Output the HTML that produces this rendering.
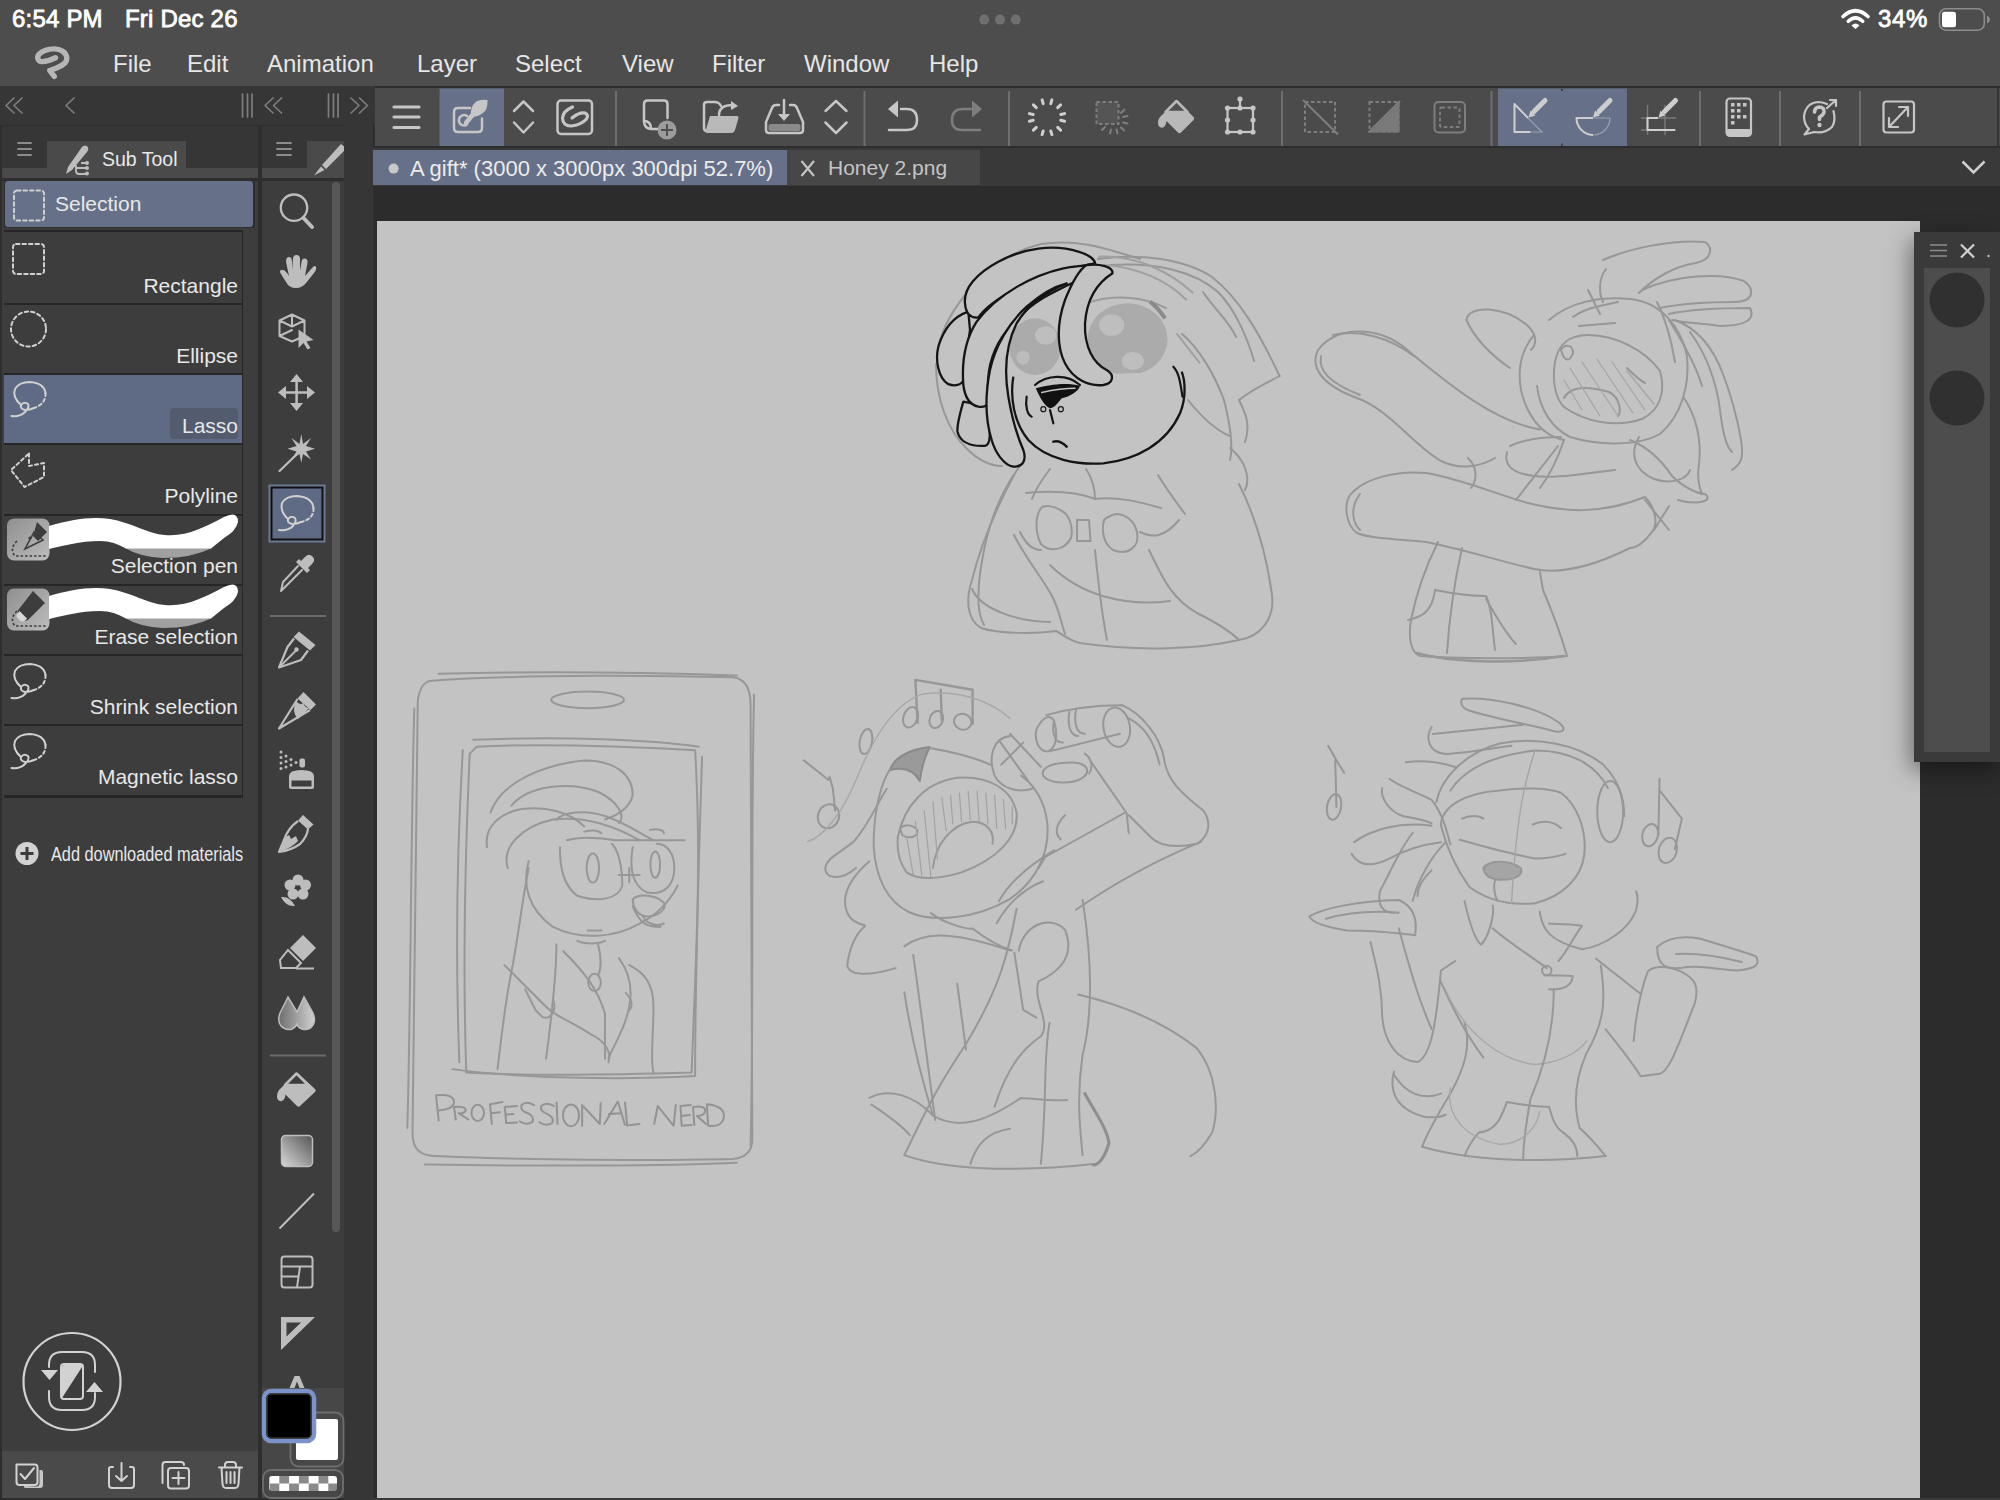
<!DOCTYPE html>
<html><head><meta charset="utf-8">
<style>
*{margin:0;padding:0;box-sizing:border-box}
html,body{width:2000px;height:1500px;overflow:hidden;background:#2c2c2c;font-family:"Liberation Sans",sans-serif}
.a{position:absolute}
svg{position:absolute;overflow:visible}
.t{position:absolute;white-space:nowrap;color:#e8e8e8}
</style></head><body>
<!-- top bars -->
<div class="a" style="left:0;top:0;width:2000px;height:86px;background:#4d4d4d"></div>
<div class="t" style="left:12px;top:5px;font-size:24px;color:#fff;-webkit-text-stroke:0.8px #fff;letter-spacing:0.2px">6:54 PM</div>
<div class="t" style="left:125px;top:5px;font-size:24px;color:#fff;-webkit-text-stroke:0.8px #fff;letter-spacing:0.2px">Fri Dec 26</div>
<div class="t" style="left:113px;top:50px;font-size:24px;color:#e6e6e6">File</div>
<div class="t" style="left:187px;top:50px;font-size:24px;color:#e6e6e6">Edit</div>
<div class="t" style="left:267px;top:50px;font-size:24px;color:#e6e6e6">Animation</div>
<div class="t" style="left:417px;top:50px;font-size:24px;color:#e6e6e6">Layer</div>
<div class="t" style="left:515px;top:50px;font-size:24px;color:#e6e6e6">Select</div>
<div class="t" style="left:622px;top:50px;font-size:24px;color:#e6e6e6">View</div>
<div class="t" style="left:712px;top:50px;font-size:24px;color:#e6e6e6">Filter</div>
<div class="t" style="left:804px;top:50px;font-size:24px;color:#e6e6e6">Window</div>
<div class="t" style="left:929px;top:50px;font-size:24px;color:#e6e6e6">Help</div>


<svg style="left:0;top:0" width="2000" height="40">
<circle cx="984.2" cy="19.6" r="5" fill="#6f6f6f"/><circle cx="1000" cy="19.6" r="5" fill="#6f6f6f"/><circle cx="1015.8" cy="19.6" r="5" fill="#6f6f6f"/>
<path d="M1843 16.5Q1855.5 5 1868 16.5" fill="none" stroke="#fff" stroke-width="3.6" stroke-linecap="round"/>
<path d="M1848.3 21.3Q1855.5 14.5 1862.7 21.3" fill="none" stroke="#fff" stroke-width="3.6" stroke-linecap="round"/>
<path d="M1851.5 25.5Q1855.5 21.5 1859.5 25.5L1855.5 29Z" fill="#fff"/>
<rect x="1939.5" y="8.8" width="44.8" height="21.4" rx="6.5" fill="none" stroke="#8d8d8d" stroke-width="1.6"/>
<rect x="1942" y="11.8" width="14" height="15.5" rx="2.5" fill="#fff"/>
<path d="M1987 15.5Q1990 17 1990 19.5Q1990 22 1987 23.5Z" fill="#8d8d8d"/>
</svg>
<div class="t" style="left:1878px;top:5px;font-size:24px;color:#fff;-webkit-text-stroke:0.8px #fff;letter-spacing:0.6px">34%</div>
<!-- left nav row -->
<div class="a" style="left:0;top:86px;width:375px;height:40px;background:#363636"></div>
<div class="a" style="left:0;top:125px;width:375px;height:1375px;background:#2e2e2e"></div>

<!-- sub tool panel -->
<div class="a" style="left:2px;top:126px;width:256px;height:1372px;background:#3d3d3d"></div>
<div class="a" style="left:2px;top:126px;width:256px;height:42px;background:#363636"></div>
<div class="a" style="left:47px;top:141px;width:139px;height:27px;background:#4a4a4a"></div>
<div class="a" style="left:2px;top:168px;width:256px;height:10px;background:#4a4a4a"></div>
<div class="a" style="left:2px;top:178px;width:256px;height:3px;background:#2e2e2e"></div>

<!-- tool column panel -->
<div class="a" style="left:262px;top:126px;width:82px;height:1372px;background:#3d3d3d"></div>
<div class="a" style="left:262px;top:126px;width:82px;height:42px;background:#363636"></div>
<div class="a" style="left:307px;top:141px;width:37px;height:27px;background:#4a4a4a"></div>
<div class="a" style="left:262px;top:168px;width:82px;height:10px;background:#4a4a4a"></div>
<div class="a" style="left:262px;top:178px;width:82px;height:3px;background:#2e2e2e"></div>
<div class="a" style="left:344px;top:86px;width:29px;height:1414px;background:#363636"></div>

<!-- LEFT PANEL CONTENT -->
<div class="a" style="left:4px;top:181px;width:251px;height:47px;background:#2e2e2e"></div>
<div class="a" style="left:5px;top:181px;width:248px;height:46px;background:#667089;border-radius:3px"></div>
<div class="t" style="left:55px;top:192px;font-size:21px;color:#e8e8e8">Selection</div>
<div class="t" style="left:102px;top:148px;font-size:19.5px;color:#e8e8e8">Sub Tool</div>
<!-- list rows -->
<div class="a" style="left:4px;top:230px;width:239px;height:568px;background:#262626"></div>
<div class="a" style="left:4px;top:232px;width:238px;height:71px;background:#3d3d3d"></div>
<div class="a" style="left:4px;top:305px;width:238px;height:68px;background:#3d3d3d"></div>
<div class="a" style="left:4px;top:375px;width:238px;height:68px;background:#5f6a84"></div>
<div class="a" style="left:4px;top:445px;width:238px;height:69px;background:#3d3d3d"></div>
<div class="a" style="left:4px;top:516px;width:238px;height:68px;background:#3d3d3d"></div>
<div class="a" style="left:4px;top:586px;width:238px;height:68px;background:#3d3d3d"></div>
<div class="a" style="left:4px;top:656px;width:238px;height:68px;background:#3d3d3d"></div>
<div class="a" style="left:4px;top:726px;width:238px;height:69px;background:#3d3d3d"></div>
<div class="a" style="left:170px;top:408px;width:68px;height:31px;background:#535b6e;border-radius:4px"></div>
<div class="t" style="right:1762px;top:274px;font-size:21px;color:#e8e8e8">Rectangle</div>
<div class="t" style="right:1762px;top:344px;font-size:21px;color:#e8e8e8">Ellipse</div>
<div class="t" style="right:1762px;top:414px;font-size:21px;color:#e8e8e8">Lasso</div>
<div class="t" style="right:1762px;top:484px;font-size:21px;color:#e8e8e8">Polyline</div>
<div class="t" style="right:1762px;top:554px;font-size:21px;color:#e8e8e8">Selection pen</div>
<div class="t" style="right:1762px;top:625px;font-size:21px;color:#e8e8e8">Erase selection</div>
<div class="t" style="right:1762px;top:695px;font-size:21px;color:#e8e8e8">Shrink selection</div>
<div class="t" style="right:1762px;top:765px;font-size:21px;color:#e8e8e8">Magnetic lasso</div>
<div class="t" style="left:51px;top:843px;font-size:20px;color:#e8e8e8;transform:scaleX(0.815);transform-origin:0 0">Add downloaded materials</div>
<svg style="left:0;top:0" width="380" height="1500">
<g fill="none" stroke="#d0d0d0" stroke-width="2.4" stroke-linecap="round" stroke-linejoin="round">
<!-- panel menus -->
<path d="M18 143H31M18 149H31M18 155H31M277 143H291M277 149H291M277 155H291" stroke="#8c8c8c" stroke-width="1.8"/>
<!-- nav chevrons -->
<g stroke="#7e7e7e" stroke-width="1.7">
<path d="M14 98L6 105.5L14 113M22 98L14 105.5L22 113"/>
<path d="M74 98L66 105.5L74 113"/>
<path d="M242.5 94V117M247.5 94V117M252 94V117"/>
<path d="M273 98L265 105.5L273 113M281.5 98L273.5 105.5L281.5 113"/>
<path d="M328.5 94V117M333.5 94V117M338 94V117"/>
<path d="M351 98L359 105.5L351 113M359.5 98L367.5 105.5L359.5 113"/>
</g>
<!-- selection header icon -->
<rect x="14" y="190.5" width="30" height="30" rx="3" stroke-dasharray="3.5 3" stroke-width="2"/>
<!-- rectangle -->
<rect x="13" y="244" width="31" height="30" rx="3" stroke-dasharray="3.5 3" stroke-width="2"/>
<!-- ellipse -->
<circle cx="28.5" cy="329" r="17.5" stroke-dasharray="3.5 3" stroke-width="2"/>
<!-- lassos -->
<path d="M11.5 416Q20 417 25 412Q30 407 28 404Q24 401 21 405Q20 409 25 410Q30 410 34 408" stroke-width="2"/>
<path d="M21 405Q12 397 15 389Q19 382 30 382Q44 383 45.5 393" stroke-width="2"/>
<path d="M45.5 393Q46 404 34 408" stroke-width="2" stroke-dasharray="3 3"/>
<g transform="translate(0,282)">
<path d="M11.5 416Q20 417 25 412Q30 407 28 404Q24 401 21 405Q20 409 25 410Q30 410 34 408" stroke-width="2"/>
<path d="M21 405Q12 397 15 389Q19 382 30 382Q44 383 45.5 393" stroke-width="2"/>
<path d="M45.5 393Q46 404 34 408" stroke-width="2" stroke-dasharray="3 3"/>
</g>
<g transform="translate(0,352)">
<path d="M11.5 416Q20 417 25 412Q30 407 28 404Q24 401 21 405Q20 409 25 410Q30 410 34 408" stroke-width="2"/>
<path d="M21 405Q12 397 15 389Q19 382 30 382Q44 383 45.5 393" stroke-width="2"/>
<path d="M45.5 393Q46 404 34 408" stroke-width="2" stroke-dasharray="3 3"/>
</g>
<!-- polyline -->
<path d="M29 453.5V466L44 463V477L24.5 487L11 470L29 453.5" stroke-width="2" stroke-dasharray="3.2 3"/>
</g>
<!-- brush thumbs -->
<defs><linearGradient id="gth" x1="0" y1="0" x2="1" y2="1"><stop offset="0" stop-color="#8f8f8f"/><stop offset="1" stop-color="#bdbdbd"/></linearGradient></defs>
<g id="thumb1">
<rect x="7" y="518.5" width="42.5" height="42" rx="7" fill="url(#gth)"/>
<path d="M125 548H212Q192 558 163 558Q140 557 125 548Z" fill="#a0a0a0"/>
<path d="M49 526C70 520 90 516 110 519C130 522 148 534 165 535C186 537 205 527 224 517Q238 510 238 522Q236 531 224 538L211 548.5H126C118 544 110 541 100 541C80 541 62 546 49 549Z" fill="#fff"/>
</g>
<path d="M37 522L47 532L38 541L33 536Z" fill="#3d3d3d"/>
<path d="M34 532L25 549L43 540Z" fill="none" stroke="#3d3d3d" stroke-width="1.6"/>
<circle cx="30" cy="538" r="1.6" fill="#3d3d3d"/>
<path d="M17 541Q9 549 15 556L46 556" fill="none" stroke="#3d3d3d" stroke-width="1.6" stroke-dasharray="2.5 2"/>
<g transform="translate(0,70)">
<rect x="7" y="518.5" width="42.5" height="42" rx="7" fill="url(#gth)"/>
<path d="M125 548H212Q192 558 163 558Q140 557 125 548Z" fill="#a0a0a0"/>
<path d="M49 526C70 520 90 516 110 519C130 522 148 534 165 535C186 537 205 527 224 517Q238 510 238 522Q236 531 224 538L211 548.5H126C118 544 110 541 100 541C80 541 62 546 49 549Z" fill="#fff"/>
</g>
<path d="M33 591L45 603L29 619Q26 622 23 619L19 615Q16 612 19 609Z" fill="#3d3d3d"/>
<path d="M19.5 611L27 618.5L25 620.5Q22 622.5 20 620.5L17.5 618Q15.5 616 17.5 613.5Z" fill="#d6d6d6"/>
<path d="M17 611Q9 619 15 626L46 626" fill="none" stroke="#3d3d3d" stroke-width="1.6" stroke-dasharray="2.5 2"/>
<!-- add materials -->
<circle cx="27" cy="853.5" r="11.5" fill="#d2d2d2"/>
<path d="M27 847V860M20.5 853.5H33.5" stroke="#3d3d3d" stroke-width="3"/>
</svg>

<svg style="left:0;top:0" width="380" height="1500">
<!-- scrollbar -->
<rect x="332" y="182" width="8" height="1050" rx="4" fill="#575757"/>
<!-- separators -->
<path d="M270 616H326M270 1055.5H326" stroke="#6a6a6a" stroke-width="2"/>
<g fill="none" stroke="#bdbdbd" stroke-width="2.3" stroke-linecap="round" stroke-linejoin="round">
<!-- magnifier -->
<circle cx="294" cy="207.7" r="13.2"/>
<path d="M303.5 218L312 227" stroke-width="4"/>
<!-- cube -->
<path d="M292 314.5L304.5 320.5V336L292 341.5L279.5 336V320.5Z M279.5 320.5L292 326.5L304.5 320.5M292 314.5V326.5M279.5 336L292 330" stroke-width="2"/>
<!-- wand line -->
<path d="M296 455L279.5 471" stroke-width="2.2"/>
<!-- eyedropper -->
<path d="M302 570L286 586L281 591L283 582L298 566" stroke-width="2"/>
</g>
<!-- tab pencil -->
<path d="M341 144L344 146.5V151L326 169L322 165Z" fill="#bdbdbd"/><path d="M321 166.5L324.5 170L314 175.5Z" fill="#bdbdbd"/>
<!-- sub tool icon -->
<path d="M82 147Q85 144 88 147Q89 150 87 152L72 170L66 174L68 167Z" fill="#bdbdbd"/>
<g fill="none" stroke="#bdbdbd" stroke-width="1.8"><path d="M76 165V171Q76 174 79 174H87M76 168H87M81 163H87"/></g>
<g fill="#bdbdbd"><circle cx="87" cy="163" r="2"/><circle cx="87" cy="168" r="2"/><circle cx="87" cy="173.5" r="2"/></g>
<g fill="#bdbdbd">
<!-- hand -->
<path d="M286 262Q286 257 289 257Q292 257 292 262V270L293 259Q293 255 296.5 255Q300 255 300 259V271L301.5 262Q302 258 305 258.5Q308 259 307.5 263L305 276Q312 268 313 267Q315 265 316 267Q317 269 314 273L306 283Q302 288 296 288Q289 288 286 282L281 274Q279 271 281 270Q284 269 287 273L289 276Z"/>
<!-- cursor -->
<path d="M298.5 329.5L313.5 340L306.5 341.5L310.5 348L307.5 349.5L303.5 343L298.5 348Z"/>
<!-- move -->
<path d="M296.6 374L303 382H290Z M296.6 411L303 403H290Z M278 392.4L286 386V399Z M315 392.4L307 386V399Z"/>
<!-- star -->
<path d="M301.3 434L303 444L311 438L306 446L315 448.8L306 451.5L311 459.5L303 454L301.3 463L299.5 454L291.5 459.5L296.5 451.5L287.5 448.8L296.5 446L291.5 438L299.5 444Z"/>
<!-- eyedropper head -->
<path d="M305 557Q309 553 312.5 556.5Q316 560 312 564L308 568L310 570L307 573L296 562L299 559L301 561Z"/>
</g>
<path d="M296.6 380V405M284 392.4H309" stroke="#bdbdbd" stroke-width="2.5"/>
<!-- lasso selected button -->
<rect x="268.5" y="484.5" width="57" height="58" fill="#6d7894"/>
<rect x="270.5" y="486.5" width="53" height="54" fill="#111"/>
<rect x="272.5" y="488.5" width="49" height="50" fill="#5f6a84"/>
<g fill="none" stroke="#d0d0d0" stroke-width="2" stroke-linecap="round">
<path d="M279 530Q288 531 293 526Q297 521 295 518Q291 515 288 519Q287 523 292 524Q297 524 301 522"/>
<path d="M288 519Q280 512 282 503Q286 496 297 496Q312 497 313.5 508"/>
<path d="M313.5 508Q314 519 301 522" stroke-dasharray="3 3"/>
</g>
<!-- pen nib -->
<g fill="#bdbdbd">
<path d="M299 631.5L315.5 645L310 650.5L293.5 637Z"/>
<path d="M294 638.5L287.5 647L279 667.5L301 660L308 650.5" fill="none" stroke="#bdbdbd" stroke-width="2.2" stroke-linejoin="round"/>
<path d="M279.5 667L297.5 649" stroke="#bdbdbd" stroke-width="1.8"/>
<circle cx="296.5" cy="649.5" r="2.2"/>
<!-- pencil -->
<path d="M303.5 692L316 704.5L310.5 710L297.5 698.5Z"/>
<path d="M297.5 699L279 728.5L310 710" fill="none" stroke="#bdbdbd" stroke-width="2.2" stroke-linejoin="round"/>
<path d="M296 701Q300 706 303 703Q305 708 309 708L298 719Q291 712 296 701Z"/>
<!-- airbrush -->
<rect x="299.5" y="758.5" width="5.5" height="9" rx="1.8"/>
<path d="M289 776Q289 770 301.5 770Q314 770 314 776V787Q314 789 312 789H291Q289 789 289 787Z M291.5 780.5V786.5H311.5V780.5Z" fill-rule="evenodd"/>
<circle cx="281" cy="752" r="1.5"/><circle cx="281" cy="757.5" r="1.5"/><circle cx="281" cy="763" r="1.5"/><circle cx="281" cy="768.5" r="1.5"/>
<circle cx="286" cy="756" r="1.5"/><circle cx="286" cy="761.5" r="1.5"/><circle cx="286" cy="767" r="1.5"/>
<circle cx="291" cy="759.5" r="1.5"/><circle cx="291" cy="765" r="1.5"/><circle cx="296" cy="762.5" r="1.5"/>
<!-- brush -->
<path d="M303 815L313.5 824.5L308 829.5L298 820.5Z"/>
<path d="M298 821Q288 828 284 840Q281 847 279 852Q292 850 300 844Q307 837 308 829" fill="none" stroke="#bdbdbd" stroke-width="2.2" stroke-linejoin="round"/>
<path d="M284 838L289 835L291 839L296 836L298 841Q292 848 279.5 851.5Z"/>
<!-- flower -->
<circle cx="298" cy="880" r="5.5"/><circle cx="305.5" cy="885" r="5.5"/><circle cx="303" cy="894" r="5.5"/><circle cx="293" cy="894" r="5.5"/><circle cx="290" cy="885" r="5.5"/>
<path d="M281 897Q290 896 295 906Q286 907 281 897Z"/>
<!-- eraser -->
<path d="M303 935L316 948L303 961L290 948Z"/>
<path d="M288 950L301 963L296 968L281 968L280 960Z" fill="none" stroke="#bdbdbd" stroke-width="2"/>
<path d="M296 968.5H314" stroke="#bdbdbd" stroke-width="2"/>
</g>
<defs><linearGradient id="gblend" x1="0" y1="0" x2="1" y2="0"><stop offset="0" stop-color="#6e6e6e"/><stop offset="1" stop-color="#d0d0d0"/></linearGradient>
<linearGradient id="ggrad" x1="0" y1="1" x2="1" y2="0"><stop offset="0" stop-color="#d8d8d8"/><stop offset="1" stop-color="#555"/></linearGradient></defs>
<path d="M288 997Q283 1007 280 1013Q277 1021 281 1026Q286 1031 292 1029Q296 1027 297 1024Q298 1028 302 1029Q309 1031 313 1025Q316 1020 313 1013L304 997L297 1012Z" fill="url(#gblend)" stroke="#bdbdbd" stroke-width="1.5"/>
<!-- fill -->
<path d="M295.5 1073.5Q296.5 1072.5 298 1073.5L315 1089Q316.5 1090.5 315 1092L300 1106Q298.5 1107.5 297 1106L285.5 1094.5Q285 1099.5 282 1101Q277.5 1102 277 1096.5Q277 1091.5 281 1088Z" fill="#bdbdbd"/>
<path d="M285 1085L296.5 1073.5L308 1085Z" fill="#3d3d3d" stroke="#bdbdbd" stroke-width="2.5" stroke-linejoin="round"/>
<!-- gradient -->
<rect x="281.5" y="1135.5" width="31" height="31" rx="4" fill="url(#ggrad)" stroke="#bdbdbd" stroke-width="1.5"/>
<!-- line -->
<path d="M279.5 1228.5L314 1193.5" stroke="#bdbdbd" stroke-width="2"/>
<!-- frame -->
<g fill="none" stroke="#bdbdbd" stroke-width="2">
<rect x="281.5" y="1256.5" width="31" height="31" rx="3"/>
<path d="M281.5 1266.5H312.5M281.5 1276.5H298M300 1266.5L297 1287.5"/>
</g>
<!-- ruler -->
<path d="M281 1317H315L281 1350Z M286.5 1322.5V1336.5L301 1322.5Z" fill="#bdbdbd" fill-rule="evenodd"/>
<!-- text A -->
<path d="M289.5 1388L294.5 1376H299.5L304.5 1388H299.5L297 1381.5L294.5 1388Z" fill="#bdbdbd"/>
<!-- colors -->
<rect x="262" y="1388" width="82" height="110" fill="#474747"/>
<rect x="290.5" y="1412.5" width="53" height="54" rx="8" fill="none" stroke="#6e6e6e" stroke-width="1.8"/>
<rect x="296" y="1419" width="42" height="41" rx="2" fill="#fff"/>
<rect x="264" y="1391" width="50" height="50" rx="7" fill="#111" stroke="#7b93c8" stroke-width="4.5"/>
<rect x="267" y="1394" width="44" height="44" rx="4" fill="#000" stroke="#4a4a4a" stroke-width="1"/>
<rect x="263" y="1470" width="80" height="28" rx="8" fill="none" stroke="#6e6e6e" stroke-width="1.8"/>
<defs><pattern id="chk" x="269.5" y="1476" width="19.6" height="15" patternUnits="userSpaceOnUse"><rect width="19.6" height="15" fill="#fff"/><rect x="9.8" width="9.8" height="7.5" fill="#8a8a8a"/><rect x="0" y="7.5" width="9.8" height="7.5" fill="#8a8a8a"/></pattern></defs>
<rect x="269" y="1476" width="68" height="15" rx="3" fill="url(#chk)"/>
</svg>

<div class="a" style="left:2px;top:1451px;width:256px;height:47px;background:#4a4a4a"></div>
<svg style="left:0;top:0" width="380" height="1500">
<g fill="none" stroke="#d2d2d2" stroke-width="2" stroke-linecap="round" stroke-linejoin="round">
<circle cx="72" cy="1381.5" r="48.5" stroke-width="2.2"/>
<path d="M95 1372V1365Q95 1352 82 1352H62Q49 1352 49 1365V1367"/>
<path d="M49 1391V1397Q49 1410 62 1410H82Q95 1410 95 1397V1393"/>
<rect x="61" y="1364" width="22" height="35" rx="3"/>
<path d="M16.5 1464.5H34.5Q37.5 1464.5 37.5 1467.5V1482Q37.5 1485 34.5 1485H19.5Q16.5 1485 16.5 1482Z"/>
<path d="M20.5 1474L25 1479L34 1468"/>
<path d="M113 1467H111Q109 1467 109 1469V1485Q109 1488 112 1488H131Q134 1488 134 1485V1469Q134 1467 132 1467H130M121.5 1463V1481M116 1476L121.5 1481L127 1476"/>
<path d="M162.5 1483V1465Q162.5 1462 165.5 1462H181Q184 1462 184 1465"/>
<rect x="168" y="1468" width="21" height="20.5" rx="3"/>
<path d="M178.5 1472V1484M172.5 1478H184.5"/>
<path d="M219 1467.5H242M225 1467.5V1465Q225 1462 228 1462H233Q236 1462 236 1465V1467.5M221.5 1467.5L222.5 1484Q223 1488 226 1488H235Q238 1488 238.5 1484L239.5 1467.5M226.5 1472V1483M230.5 1472V1483M234.5 1472V1483"/>
</g>
<path d="M62 1398L82 1367V1365H64Q62 1365 62 1367Z" fill="#d2d2d2"/>
<path d="M41 1370H58L49.5 1380Z M86 1392H103L94.5 1382Z" fill="#d2d2d2"/>
<path d="M24 1486V1487Q24 1488 26 1488H40Q43 1488 43 1485V1472Q43 1470 41 1470H39.5V1483Q39.5 1486.5 36 1486.5Z" fill="#c8c8c8"/>
</svg>

<!-- toolbar -->
<div class="a" style="left:375px;top:88px;width:1625px;height:58px;background:#4b4b4b"></div>
<!-- tabs -->
<div class="a" style="left:373px;top:146px;width:1627px;height:40px;background:#393939"></div>
<div class="a" style="left:373px;top:146px;width:1627px;height:2px;background:#2e2e2e"></div>
<div class="a" style="left:373px;top:150px;width:414px;height:35px;background:#667089"></div>
<div class="a" style="left:787px;top:150px;width:193px;height:35px;background:#474747"></div>
<div class="t" style="left:410px;top:156px;font-size:22px;color:#ececec">A gift* (3000 x 3000px 300dpi 52.7%)</div>
<div class="t" style="left:828px;top:156px;font-size:21px;color:#c4c4c4">Honey 2.png</div>
<svg style="left:0;top:0" width="2000" height="200">
<circle cx="393.6" cy="168.6" r="5" fill="#c8c8c8"/>
<path d="M801.5 161L814 176M814 161L801.5 176" stroke="#c4c4c4" stroke-width="2.2"/>
<path d="M1962.5 161.5L1973.5 172.5L1984.5 161.5" fill="none" stroke="#d0d0d0" stroke-width="2.5"/>
<path d="M1998 88V146" stroke="#333" stroke-width="2"/>
<path d="M55.5 57.8C52 59.5 46 61.8 41.5 61.6C37.5 61.3 36.5 56.5 39.5 53.8C43 50.5 49 49 54 48.9C60.5 48.8 66.5 52 66.8 58.5C67 63.5 62 66 56 68.2L49.8 70.6L54.3 76.3" fill="none" stroke="#b6b6b6" stroke-width="5.4" stroke-linecap="round" stroke-linejoin="round"/>
</svg>

<!-- TOPICONS -->
<svg style="left:0;top:0" width="2000" height="1500" viewBox="0 0 2000 1500">
<g fill="none" stroke="#c6c6c6" stroke-width="2.5" stroke-linecap="round" stroke-linejoin="round">
<!-- hamburger -->
<path d="M394 107H419M394 117H419M394 127.5H419" stroke-width="3.2"/>
</g>
<!-- highlight buttons -->
<rect x="439.5" y="88.5" width="64.5" height="57.5" fill="#667089"/>
<rect x="1498" y="88.5" width="129" height="57.5" fill="#667089"/>
<g fill="none" stroke="#c6c6c6" stroke-width="2.5" stroke-linecap="round" stroke-linejoin="round">
<!-- selection layer icon -->
<path d="M470 108H458Q454 108 454 112V128Q454 132 458 132H478Q482 132 482 128V118.5"/>
<path d="M467 116A5.2 5.2 0 1 0 466.5 125" />
</g>
<path d="M466 123L474 113" stroke="#c6c6c6" stroke-width="4.5" stroke-linecap="round"/>
<path d="M471 115Q470 106 477 101Q483 99 487.5 100Q488 105 486 110Q481 116 473 117Z" fill="#c6c6c6"/>
<g fill="none" stroke="#c6c6c6" stroke-width="2.5" stroke-linecap="round" stroke-linejoin="round">
<!-- chevrons -->
<path d="M514 111L523.5 101.5L533 111M514 122.5L523.5 132.5L533 122.5"/>
<!-- link box -->
<rect x="557.5" y="100.5" width="34.5" height="33.5" rx="3.5"/>
<path d="M572.5 107Q563 111 562.5 118Q563 126 571 126Q581 125 586.5 119Q589 115 585 113Q579 112 572 118" stroke-width="3.2"/>
<!-- separators -->
</g>
<g stroke="#6e6e6e" stroke-width="2">
<path d="M616 91V146M864.5 91V146M1009 91V146M1282 91V146M1491.5 91V146M1700 91V146M1780 91V146M1860 91V146"/>
</g>
<g fill="none" stroke="#c6c6c6" stroke-width="2.5" stroke-linecap="round" stroke-linejoin="round">
<!-- new doc -->
<path d="M660 129H652Q644 129 644 121V104Q644 100.5 647.5 100.5H664Q667.5 100.5 667.5 104V118"/>
<path d="M644 121Q651 121 651 129" />
</g>
<circle cx="667" cy="130" r="9.5" fill="#9c9c9c"/>
<path d="M667 124V136M661 130H673" stroke="#505050" stroke-width="2"/>
<!-- folder -->
<g fill="none" stroke="#c6c6c6" stroke-width="2.5" stroke-linejoin="round" stroke-linecap="round">
<path d="M713 131H707Q704 131 704 128V105Q704 102 707 102H715Q719 102 721 106"/>
<path d="M719 115Q719 105 733 105" />
</g>
<path d="M731 101L738 106L731 110Z" fill="#c6c6c6"/>
<path d="M710 116H737Q739 116 738.5 118L735 130Q734 133 731 133H707Q705 133 705.5 131Z" fill="#b9b9b9"/>
<!-- tray save -->
<g fill="none" stroke="#c6c6c6" stroke-width="2.5" stroke-linejoin="round" stroke-linecap="round">
<path d="M779 105H776Q773 105 772 108L766 122V130Q766 133 769 133H800Q803 133 803 130V122L797 108Q796 105 793 105H790"/>
<path d="M784 100V116"/>
</g>
<path d="M778 114H790L784 121Z" fill="#c6c6c6"/>
<rect x="768.5" y="124" width="32" height="7" rx="2.5" fill="#8a8a8a"/>
<g fill="none" stroke="#c6c6c6" stroke-width="2.5" stroke-linecap="round" stroke-linejoin="round">
<path d="M825.5 111L836 101L846.5 111M825.5 122.5L836 133L846.5 122.5"/>
<!-- undo -->
<path d="M901 109H907Q917 109 917 120Q917 130 907 130H889"/>
</g>
<path d="M888 109L898 100.5V117.5Z" fill="#c6c6c6"/>
<g fill="none" stroke="#7e7e7e" stroke-width="2.5" stroke-linecap="round" stroke-linejoin="round">
<path d="M971 109H963Q952 109 952 120Q952 130 962 130H980"/>
</g>
<path d="M982 109L972 100.5V117.5Z" fill="#7e7e7e"/>
<!-- spinner -->
<g stroke="#cfcfcf" stroke-width="3" stroke-linecap="round">
<path d="M1043.2 103.7L1042.1 99.9M1050.8 103.7L1051.9 99.9M1036.3 107.6L1033.4 104.8M1057.7 107.6L1060.6 104.8M1033.2 114.5L1029.4 113.6M1060.8 114.5L1064.6 113.6M1033.2 120.3L1029.4 121.2M1060.8 120.3L1064.6 121.2M1036.3 127.4L1033.4 130.2M1057.7 127.4L1060.6 130.2M1043.2 131L1042.1 134.6M1050.8 131L1051.9 134.6"/>
</g>
<!-- dim dashed sel -->
<rect x="1096.5" y="102" width="22" height="22" fill="#555" stroke="#7e7e7e" stroke-width="2" stroke-dasharray="3.5 2.5"/>
<g stroke="#7e7e7e" stroke-width="2" stroke-linecap="round">
<path d="M1121 113L1124.5 109.5M1123 117L1127.5 116M1123 122.5L1127.5 123.5M1121 127.5L1124 130.5M1116.5 129.5L1117.5 133.5M1111 129.5L1110 133.5M1105 127L1102 130"/>
</g>
<!-- fill bucket -->
<path d="M1175.5 101.5Q1176.5 100.5 1178 101.5L1193.5 117Q1195 118.5 1193.5 120L1181 132.5Q1179.5 134 1178 132.5L1166.5 121Q1166 126 1163 127.5Q1158.5 128.5 1158 123Q1158 118 1162 115Z" fill="#b9b9b9"/>
<path d="M1165.5 112L1176.5 101L1187.5 112Z" fill="#505050" stroke="#b9b9b9" stroke-width="2.5" stroke-linejoin="round"/>
<!-- transform -->
<g fill="none" stroke="#c6c6c6" stroke-width="2.2">
<rect x="1227.5" y="108" width="25.5" height="24"/>
<path d="M1240 101V108"/>
</g>
<g fill="#c6c6c6">
<circle cx="1240" cy="99" r="2.6"/><circle cx="1227.5" cy="108" r="2.6"/><circle cx="1240" cy="108" r="2.6"/><circle cx="1253" cy="108" r="2.6"/>
<circle cx="1227.5" cy="120" r="2.6"/><circle cx="1253" cy="120" r="2.6"/><circle cx="1227.5" cy="132" r="2.6"/><circle cx="1240" cy="132" r="2.6"/><circle cx="1253" cy="132" r="2.6"/>
</g>
<!-- dim diag dashed rect -->
<g fill="none" stroke="#7e7e7e" stroke-width="2">
<rect x="1305" y="102" width="30" height="30" stroke-dasharray="3.5 2.5"/>
<path d="M1303 100L1338 134.5"/>
<rect x="1369.5" y="102" width="29" height="29.5" stroke-dasharray="3.5 2.5"/>
<path d="M1368.5 132.5L1400 101"/>
</g>
<path d="M1399.5 103V132.5H1370Z" fill="#7a7a7a"/>
<rect x="1434.5" y="102" width="30.5" height="30.5" rx="4" fill="none" stroke="#7e7e7e" stroke-width="2"/>
<rect x="1440" y="107.5" width="19.5" height="19.5" rx="1.5" fill="none" stroke="#7e7e7e" stroke-width="2" stroke-dasharray="3.5 2.5"/>
<!-- ruler icons -->
<g fill="none" stroke="#7a7a7a" stroke-width="1.4">
<path d="M1647.5 105V135M1665 105V135M1641 118H1676M1641 130H1676"/>
</g>
<path d="M1562 88.5V91M1562 143.5V146" stroke="#444" stroke-width="2"/>
<g fill="none" stroke="#cfcfcf" stroke-width="2" stroke-linejoin="round">
<path d="M1530.5 132H1514.5V104L1528 118"/>
<path d="M1593 118H1576.5A17 17 0 0 0 1593 135"/>
<path d="M1658 118H1647.5V130H1675"/>
</g>
<g fill="none" stroke="#9aa0ae" stroke-width="1.2">
<path d="M1530.5 132H1542L1528 118M1593 118H1610A17 17 0 0 1 1593 135"/>
</g>
<g stroke="#cdcdcd" stroke-width="5" stroke-linecap="round">
<path d="M1534 111.5L1545 100.5M1599 111.5L1610 100.5M1664.5 111.5L1675.5 100.5"/>
</g>
<path d="M1528.5 117.5L1530.5 110.5L1535.5 115.5Z M1593 117.5L1595 110.5L1600 115.5Z M1658.5 117.5L1660.5 110.5L1665.5 115.5Z" fill="#cdcdcd"/>
<!-- phone grid -->
<rect x="1726.5" y="98.5" width="24.5" height="37.5" rx="3.5" fill="none" stroke="#c6c6c6" stroke-width="2.2"/>
<rect x="1726.5" y="129" width="24.5" height="7" rx="2" fill="#c6c6c6"/>
<g fill="#c6c6c6">
<rect x="1731" y="103" width="3.5" height="3.5"/><rect x="1737" y="103" width="3.5" height="3.5"/><rect x="1743" y="103" width="3.5" height="3.5"/>
<rect x="1731" y="109" width="3.5" height="3.5"/><rect x="1737" y="109" width="3.5" height="3.5"/>
<rect x="1731" y="115" width="3.5" height="3.5"/><rect x="1737" y="115" width="3.5" height="3.5"/><rect x="1743" y="115" width="3.5" height="3.5"/>
<rect x="1731" y="121" width="3.5" height="3.5"/>
</g>
<!-- help bubble -->
<g fill="none" stroke="#c6c6c6" stroke-width="2.2" stroke-linecap="round" stroke-linejoin="round">
<path d="M1827 104Q1822 102 1818 102Q1806 103 1804 116Q1804 124 1809 129L1804.5 134.5L1814 132Q1825 134 1832 127Q1836 121 1833.5 111"/>
<path d="M1827 108L1836 100M1830 100H1836V106"/>
<path d="M1814.5 112Q1815 107 1819.5 107Q1824.5 107.5 1824 112Q1823.5 115 1819.5 117V119.5" stroke-width="3.6"/>
</g>
<circle cx="1819.5" cy="125" r="2.2" fill="#c6c6c6"/>
<!-- expand -->
<g fill="none" stroke="#c6c6c6" stroke-width="2.2" stroke-linecap="round" stroke-linejoin="round">
<rect x="1883.5" y="101.5" width="30.5" height="31" rx="3"/>
<path d="M1889 127L1908 107M1899 107H1908V116M1889 118V127H1898"/>
</g>
</svg>

<!-- canvas -->
<div class="a" style="left:377px;top:221px;width:1543px;height:1277px;background:#c3c3c3"></div>
<div class="a" style="left:373px;top:1498px;width:1627px;height:2px;background:#3a3a3a"></div>
<!-- SKETCH -->
<svg style="left:0;top:0" width="2000" height="1500">
<defs>
<filter id="pencil" x="-5%" y="-5%" width="110%" height="110%"><feTurbulence type="fractalNoise" baseFrequency="0.9" numOctaves="1" seed="3" result="n"/><feDisplacementMap in="SourceGraphic" in2="n" scale="1.6"/></filter>
</defs>
<!-- SKETCH 1 body (zoom frame 900,220 x3.333) -->
<g transform="translate(900,220) scale(0.3)" fill="none" stroke="#979797" stroke-width="2" vector-effect="non-scaling-stroke" stroke-linecap="round" stroke-linejoin="round">
<g vector-effect="non-scaling-stroke">
<path vector-effect="non-scaling-stroke" d="M130 420C150 300 300 120 470 80C600 60 700 100 800 130"/>
<path vector-effect="non-scaling-stroke" d="M660 130C800 110 950 130 1040 190C1130 260 1200 380 1265 520"/>
<path vector-effect="non-scaling-stroke" d="M700 150C850 140 980 170 1060 240C1120 300 1160 400 1180 470"/>
<path vector-effect="non-scaling-stroke" d="M1265 520C1230 540 1180 560 1130 600C1150 640 1170 680 1150 740"/>
<path vector-effect="non-scaling-stroke" d="M940 380C1000 430 1050 520 1080 600C1100 680 1110 760 1100 800"/>
<path vector-effect="non-scaling-stroke" d="M1010 240C1050 300 1100 340 1120 390"/>
<path vector-effect="non-scaling-stroke" d="M1100 760C1150 800 1170 860 1150 900"/>
<path vector-effect="non-scaling-stroke" d="M1130 880C1180 980 1220 1100 1240 1250C1250 1330 1200 1390 1130 1400"/>
<path vector-effect="non-scaling-stroke" d="M1130 1400C1000 1430 800 1440 600 1410C560 1400 540 1380 520 1370"/>
<path vector-effect="non-scaling-stroke" d="M520 1370C450 1380 330 1380 270 1360C220 1330 220 1260 240 1200C260 1120 300 1000 380 850"/>
<path vector-effect="non-scaling-stroke" d="M400 820C340 900 300 1000 280 1100C260 1200 250 1300 280 1350"/>
<path vector-effect="non-scaling-stroke" d="M500 830C470 870 450 900 440 930"/>
<path vector-effect="non-scaling-stroke" d="M420 910C520 900 600 910 650 930C720 920 800 940 870 960"/>
<path vector-effect="non-scaling-stroke" d="M620 830C640 860 650 900 650 930"/>
<path vector-effect="non-scaling-stroke" d="M860 850C890 900 920 940 950 980"/>
<path vector-effect="non-scaling-stroke" d="M470 960C450 990 450 1040 470 1080C500 1110 550 1100 570 1060C580 1020 560 980 540 970C510 950 480 950 470 960Z"/>
<path vector-effect="non-scaling-stroke" d="M400 1040C420 1080 440 1100 470 1100"/>
<path vector-effect="non-scaling-stroke" d="M680 1000C670 1040 680 1080 710 1100C760 1120 800 1090 790 1040C780 1000 750 980 720 980C700 985 690 990 680 1000Z"/>
<path vector-effect="non-scaling-stroke" d="M590 1000L590 1070L635 1070L630 1000Z"/>
<path vector-effect="non-scaling-stroke" d="M800 1040C840 1060 880 1060 930 1000"/>
<path vector-effect="non-scaling-stroke" d="M830 1100C870 1180 900 1260 990 1310C1050 1340 1100 1370 1130 1400"/>
<path vector-effect="non-scaling-stroke" d="M380 1050C420 1130 480 1200 510 1260C530 1300 540 1350 550 1380"/>
<path vector-effect="non-scaling-stroke" d="M500 1150C600 1250 750 1290 900 1270"/>
<path vector-effect="non-scaling-stroke" d="M650 1100C660 1200 670 1300 690 1400"/>
<path vector-effect="non-scaling-stroke" d="M240 1230C270 1300 400 1340 500 1340"/>
<path vector-effect="non-scaling-stroke" d="M120 480C120 600 160 700 220 760C260 800 300 820 340 820"/>
<path vector-effect="non-scaling-stroke" d="M960 600C1000 650 1050 700 1100 720"/>
</g>
</g>
<!-- head shading (eyes) -->
<g transform="translate(920,230) scale(0.16667)">
<ellipse cx="1245" cy="655" rx="240" ry="216" fill="#a3a3a3" opacity="0.75"/>
<ellipse cx="1150" cy="570" rx="75" ry="65" fill="#c3c3c3" opacity="0.8"/>
<ellipse cx="1277" cy="786" rx="67" ry="54" fill="#c3c3c3" opacity="0.8"/>
<ellipse cx="690" cy="700" rx="155" ry="170" fill="#a3a3a3" opacity="0.75"/>
<ellipse cx="754" cy="633" rx="65" ry="55" fill="#c3c3c3" opacity="0.8"/><ellipse cx="618" cy="765" rx="40" ry="42" fill="#c3c3c3" opacity="0.7"/>
<path d="M1000 440C1150 380 1350 400 1480 470" fill="none" stroke="#9a9a9a" stroke-width="2" vector-effect="non-scaling-stroke"/>
<path d="M1380 430C1420 460 1450 500 1470 530" fill="none" stroke="#8a8a8a" stroke-width="4" vector-effect="non-scaling-stroke"/>
<path d="M1160 960L1220 900M1200 1000L1280 930M1240 1020L1320 950" fill="none" stroke="#9a9a9a" stroke-width="1.5" vector-effect="non-scaling-stroke"/>
<path d="M1070 160C1300 150 1500 250 1640 380" fill="none" stroke="#a0a0a0" stroke-width="2" vector-effect="non-scaling-stroke"/>
<path d="M1100 210C1300 220 1480 300 1600 420" fill="none" stroke="#a0a0a0" stroke-width="2" vector-effect="non-scaling-stroke"/>
<path d="M1540 620C1600 700 1650 760 1680 800" fill="none" stroke="#a0a0a0" stroke-width="2" vector-effect="non-scaling-stroke"/>
</g>
<!-- INKED head (zoom frame 920,230 x6) -->
<g transform="translate(920,230) scale(0.16667)" fill="#c3c3c3" stroke="#151515" stroke-width="2.3" stroke-linejoin="round">
<!-- head circle -->
<path vector-effect="non-scaling-stroke" d="M560 880C540 1000 560 1150 650 1260C760 1380 950 1410 1100 1400C1300 1380 1480 1280 1560 1100C1600 1000 1590 900 1570 850"/>
<!-- lock C (left short) -->
<path vector-effect="non-scaling-stroke" d="M290 490C200 520 140 600 110 700C90 780 110 890 170 925C210 940 250 930 260 900L300 600Z"/>
<!-- lock E (bottom-left hanging) -->
<path vector-effect="non-scaling-stroke" d="M260 1030C240 1100 220 1170 225 1210C240 1270 300 1300 390 1295C430 1290 420 1200 410 1060Z"/>
<!-- lock A (top) -->
<path vector-effect="non-scaling-stroke" d="M270 440C260 350 340 260 470 190C620 110 800 80 950 130C1020 150 1050 180 1050 200C900 230 700 270 540 370C440 430 380 480 350 525C300 530 275 500 270 440Z"/>
<!-- lock B -->
<path vector-effect="non-scaling-stroke" d="M1050 200C1000 215 950 215 860 230C680 270 470 380 340 550C270 660 250 800 260 930C270 1010 300 1050 350 1060C390 1065 410 1050 410 1030C400 900 410 790 470 680C530 570 650 450 790 380C900 320 1000 280 1070 265Z"/>
<!-- lock D -->
<path vector-effect="non-scaling-stroke" d="M880 320C760 370 650 440 580 560C520 680 500 820 530 1000C550 1120 580 1230 620 1320C640 1380 620 1420 560 1420C500 1410 450 1330 430 1260C390 1130 390 990 420 840C450 700 530 560 640 460C720 390 800 340 880 320Z"/>
<!-- lock F -->
<path vector-effect="non-scaling-stroke" d="M1000 210C1080 200 1160 220 1155 260C1060 320 1000 420 990 560C985 700 1040 800 1120 840C1170 870 1160 920 1100 930C1020 940 920 900 870 800C820 700 820 560 870 420C910 320 950 240 1000 210Z"/>
</g>
<g transform="translate(920,230) scale(0.16667)" fill="none" stroke="#151515" stroke-width="2.2" stroke-linecap="round">
<path vector-effect="non-scaling-stroke" d="M690 930C760 870 880 860 960 930"/>
<path vector-effect="non-scaling-stroke" d="M640 1000C630 1060 645 1110 670 1120"/>
<path vector-effect="non-scaling-stroke" d="M800 1270C830 1260 860 1280 880 1300" stroke-width="2.5"/>
<path vector-effect="non-scaling-stroke" d="M1575 1000C1560 900 1550 850 1520 820"/>
<path vector-effect="non-scaling-stroke" d="M780 1080L800 1160"/>
<path d="M695 950C760 930 880 910 960 935C950 970 900 1000 850 1010C820 1050 800 1070 780 1070C750 1060 720 1010 695 950Z" fill="#111" stroke="none"/>
<path d="M730 975C800 960 880 950 930 950" stroke="#c3c3c3" stroke-width="1.5" vector-effect="non-scaling-stroke"/>
<circle cx="740" cy="1075" r="15" stroke-width="1.2" vector-effect="non-scaling-stroke"/>
<circle cx="845" cy="1075" r="15" stroke-width="1.2" vector-effect="non-scaling-stroke"/>
</g>
</svg>



<svg style="left:0;top:0" width="2000" height="1500">
<!-- SKETCH 2 (frame 1300,230 x3.333) -->
<g transform="translate(1300,230) scale(0.3)" fill="none" stroke="#979797" stroke-width="2" stroke-linecap="round" stroke-linejoin="round">
<path vector-effect="non-scaling-stroke" d="M800 665C650 640 500 520 340 385C250 320 120 320 60 400C30 460 80 520 190 560C300 600 380 720 470 770C530 800 600 790 650 760"/>
<path vector-effect="non-scaling-stroke" d="M70 420C60 470 100 510 200 550"/>
<path vector-effect="non-scaling-stroke" d="M110 350C200 330 300 360 380 420"/>
<path vector-effect="non-scaling-stroke" d="M555 300C560 250 680 250 760 320C790 350 790 380 770 400"/>
<path vector-effect="non-scaling-stroke" d="M555 300C580 360 640 420 700 460"/>
<path vector-effect="non-scaling-stroke" d="M780 350C720 420 720 520 760 600C790 660 830 690 880 700"/>
<path vector-effect="non-scaling-stroke" d="M830 300C900 240 1000 220 1100 230C1200 240 1270 320 1290 420C1300 520 1270 620 1200 680C1130 720 1000 720 900 690C840 660 800 600 790 520"/>
<path vector-effect="non-scaling-stroke" d="M850 440C860 380 900 350 960 350C1050 350 1150 400 1200 470C1220 540 1200 600 1140 630C1050 660 950 640 880 590C850 560 840 500 850 440Z"/>
<path vector-effect="non-scaling-stroke" d="M880 560C900 520 960 520 1030 540C1070 560 1070 610 1060 620"/>
<path vector-effect="non-scaling-stroke" d="M870 400C880 380 910 380 910 410C900 440 880 440 870 400Z"/>
<path vector-effect="non-scaling-stroke" d="M1090 460C1110 480 1130 500 1150 510" />
<g stroke="#a4a4a4" stroke-width="1.2">
<path vector-effect="non-scaling-stroke" d="M900 460L1000 620M940 440L1060 620M990 430L1110 610M1040 440L1150 600M1090 470L1180 580M880 500L940 600"/>
</g>
<path vector-effect="non-scaling-stroke" d="M910 290C950 260 1010 250 1060 240M930 320L1050 310M960 200L1000 280"/>
<path vector-effect="non-scaling-stroke" d="M1010 100C1100 60 1250 30 1350 40C1380 60 1370 100 1320 110C1250 120 1180 160 1130 210"/>
<path vector-effect="non-scaling-stroke" d="M1140 200C1250 150 1400 140 1480 170C1520 200 1510 240 1450 240C1350 240 1250 250 1200 260"/>
<path vector-effect="non-scaling-stroke" d="M1230 280C1320 260 1440 260 1500 260C1520 300 1480 320 1400 320C1330 310 1280 310 1240 300"/>
<path vector-effect="non-scaling-stroke" d="M1020 130C990 170 1000 220 1010 240"/>
<path vector-effect="non-scaling-stroke" d="M1190 240C1220 300 1240 380 1250 440M1230 300C1280 380 1320 450 1340 520"/>
<path vector-effect="non-scaling-stroke" d="M1250 300C1330 330 1380 400 1410 480C1440 560 1460 640 1470 700C1480 760 1470 780 1440 800"/>
<path vector-effect="non-scaling-stroke" d="M1300 340C1360 420 1390 520 1400 600C1410 680 1420 720 1440 740"/>
<path vector-effect="non-scaling-stroke" d="M1280 560C1320 620 1340 700 1330 780C1320 840 1340 880 1340 880"/>
<path vector-effect="non-scaling-stroke" d="M700 720C740 700 800 690 870 690M690 740C680 780 700 810 780 820C850 830 950 810 1050 800"/>
<path vector-effect="non-scaling-stroke" d="M880 700C860 760 830 820 800 860M860 720L720 900"/>
<path vector-effect="non-scaling-stroke" d="M1100 700C1150 720 1200 760 1240 820C1280 860 1330 880 1350 880C1380 900 1330 920 1260 900"/>
<path vector-effect="non-scaling-stroke" d="M1130 690C1100 740 1110 800 1180 830C1240 850 1290 830 1300 800"/>
<path vector-effect="non-scaling-stroke" d="M180 870C220 830 320 800 420 810C540 830 650 880 760 910C880 940 1000 950 1150 890"/>
<path vector-effect="non-scaling-stroke" d="M180 870C140 900 150 980 190 1010C240 1030 320 1030 420 1040C530 1060 650 1100 780 1130C880 1150 1000 1110 1100 1060"/>
<path vector-effect="non-scaling-stroke" d="M200 880C170 920 170 970 200 1000"/>
<path vector-effect="non-scaling-stroke" d="M1150 890C1180 920 1200 980 1170 1010C1150 1040 1120 1060 1100 1060"/>
<path vector-effect="non-scaling-stroke" d="M1150 900L1230 1000M1180 1000L1230 920"/>
<path vector-effect="non-scaling-stroke" d="M560 760C580 780 600 820 570 860"/>
<path vector-effect="non-scaling-stroke" d="M460 1040C420 1120 390 1200 370 1300C360 1360 370 1410 400 1420C550 1430 750 1430 890 1420C870 1350 840 1270 810 1200L800 1140"/>
<path vector-effect="non-scaling-stroke" d="M450 1200C500 1210 560 1220 620 1220C640 1260 640 1320 650 1400"/>
<path vector-effect="non-scaling-stroke" d="M540 1060C520 1150 500 1250 490 1410"/>
<path vector-effect="non-scaling-stroke" d="M360 1300C400 1290 440 1280 450 1200"/>
<path vector-effect="non-scaling-stroke" d="M620 1230C660 1300 700 1360 720 1380"/>
<path vector-effect="non-scaling-stroke" d="M390 1410C500 1440 700 1450 880 1420" stroke-width="2.6"/>
</g>
<!-- SKETCH 3 badge (frame 390,660 x2.884) -->
<g transform="translate(390,660) scale(0.34672)" fill="none" stroke="#979797" stroke-width="2" stroke-linecap="round" stroke-linejoin="round">
<path vector-effect="non-scaling-stroke" d="M120 60C400 40 800 45 990 50C1030 55 1040 90 1040 130C1045 500 1040 1000 1045 1390C1040 1430 1010 1440 970 1440C700 1445 300 1440 120 1430C75 1425 65 1400 65 1360C70 1000 75 500 80 120C85 75 100 62 120 60Z"/>
<path vector-effect="non-scaling-stroke" d="M140 40C500 30 850 40 1000 45M1050 100C1040 500 1050 1000 1040 1400M50 1350C60 1000 60 500 70 140M100 1455C400 1460 800 1460 1000 1450"/>
<ellipse vector-effect="non-scaling-stroke" cx="570" cy="115" rx="105" ry="24"/>
<path vector-effect="non-scaling-stroke" d="M250 250C450 240 700 250 880 260C900 600 880 900 870 1190C700 1195 400 1200 220 1190C210 900 215 600 230 270Z"/>
<path vector-effect="non-scaling-stroke" d="M240 230C500 220 750 230 890 250M900 280C890 600 880 900 880 1200M200 1160C190 900 190 600 210 260M180 1180C400 1210 700 1210 880 1200"/>
<path vector-effect="non-scaling-stroke" d="M290 440C320 350 450 300 560 290C650 290 700 330 700 390C690 430 650 450 620 460"/>
<path vector-effect="non-scaling-stroke" d="M350 420C400 360 520 350 600 380C660 410 680 450 660 470"/>
<path vector-effect="non-scaling-stroke" d="M280 540C270 480 320 440 380 430C450 420 520 440 560 480"/>
<path vector-effect="non-scaling-stroke" d="M340 600C320 540 380 480 470 460C560 450 650 480 720 520"/>
<path vector-effect="non-scaling-stroke" d="M480 460C500 440 560 430 620 450C680 470 720 500 760 520"/>
<path vector-effect="non-scaling-stroke" d="M510 520C540 510 600 510 650 520C700 520 760 520 850 520"/>
<path vector-effect="non-scaling-stroke" d="M490 540C490 600 500 650 540 680C600 700 660 690 670 650C670 600 660 550 640 530"/>
<path vector-effect="non-scaling-stroke" d="M700 540C690 600 700 650 740 670C790 680 820 650 820 600C820 560 800 530 770 530"/>
<path vector-effect="non-scaling-stroke" d="M660 620L720 620M690 600L690 640"/>
<ellipse vector-effect="non-scaling-stroke" cx="585" cy="600" rx="18" ry="42"/>
<ellipse vector-effect="non-scaling-stroke" cx="765" cy="590" rx="14" ry="38"/>
<path vector-effect="non-scaling-stroke" d="M560 495C580 490 600 490 610 500M750 490C770 485 790 490 790 500"/>
<path vector-effect="non-scaling-stroke" d="M400 580C380 650 400 720 470 770C550 810 650 800 720 760C780 730 810 690 830 650"/>
<path vector-effect="non-scaling-stroke" d="M700 690C720 670 770 680 790 700C800 720 770 740 740 740C710 735 700 710 700 690Z"/>
<path vector-effect="non-scaling-stroke" d="M730 740C740 760 770 770 790 760M700 710C720 760 740 770 780 770"/>
<path vector-effect="non-scaling-stroke" d="M570 780L610 780M540 810C560 820 600 820 620 810"/>
<path vector-effect="non-scaling-stroke" d="M400 600C380 700 370 800 350 900C330 1000 320 1100 310 1180"/>
<path vector-effect="non-scaling-stroke" d="M480 820C480 900 470 1000 450 1150"/>
<path vector-effect="non-scaling-stroke" d="M330 880C380 930 420 970 450 1000C480 1030 520 1040 580 1080C620 1100 640 1130 630 1160"/>
<path vector-effect="non-scaling-stroke" d="M500 840C560 900 600 950 620 1020L620 1150"/>
<path vector-effect="non-scaling-stroke" d="M660 860C690 900 700 950 690 1000C680 1060 650 1100 630 1150"/>
<path vector-effect="non-scaling-stroke" d="M600 820C610 860 610 890 600 910"/>
<ellipse vector-effect="non-scaling-stroke" cx="590" cy="930" rx="18" ry="25"/>
<path vector-effect="non-scaling-stroke" d="M690 880C730 900 760 930 760 1000C760 1080 750 1150 760 1190"/>
<path vector-effect="non-scaling-stroke" d="M390 950L420 1010L440 1030C470 1040 480 1000 470 980"/>
<path vector-effect="non-scaling-stroke" d="M680 960C700 980 700 1000 690 1010"/>
</g>
<g transform="translate(400,1070) scale(0.18)" fill="none" stroke="#939393" stroke-width="2" stroke-linecap="round" stroke-linejoin="round">
<path vector-effect="non-scaling-stroke" d="M215 280L200 140Q300 130 300 180Q295 220 210 225"/>
<path vector-effect="non-scaling-stroke" d="M310 275L300 205Q370 200 365 225Q355 245 325 240L380 275"/>
<ellipse vector-effect="non-scaling-stroke" cx="432" cy="238" rx="35" ry="45"/>
<path vector-effect="non-scaling-stroke" d="M510 300L500 190L570 178M508 240L555 235"/>
<path vector-effect="non-scaling-stroke" d="M650 200L582 205L590 295L650 292M585 248L630 245"/>
<path vector-effect="non-scaling-stroke" d="M745 195Q700 170 675 195Q665 225 710 240Q750 260 735 290Q700 310 665 285"/>
<path vector-effect="non-scaling-stroke" d="M855 200Q810 175 785 200Q775 230 820 245Q860 265 845 295Q810 315 775 290"/>
<path vector-effect="non-scaling-stroke" d="M870 180L875 300"/>
<ellipse vector-effect="non-scaling-stroke" cx="950" cy="252" rx="45" ry="60"/>
<path vector-effect="non-scaling-stroke" d="M1012 310L1012 195L1110 300L1115 185"/>
<path vector-effect="non-scaling-stroke" d="M1135 300L1210 175L1250 305M1160 245L1232 240"/>
<path vector-effect="non-scaling-stroke" d="M1250 180L1262 308L1330 300"/>
<path vector-effect="non-scaling-stroke" d="M1412 300L1432 200L1520 310L1532 195"/>
<path vector-effect="non-scaling-stroke" d="M1615 195L1558 200L1565 310L1620 305M1562 255L1610 250"/>
<path vector-effect="non-scaling-stroke" d="M1635 305L1628 205Q1700 195 1695 230Q1690 255 1650 255L1700 300"/>
<path vector-effect="non-scaling-stroke" d="M1712 310L1705 190Q1800 200 1800 255Q1795 320 1712 310"/>
</g>
</svg>

<svg style="left:0;top:0" width="2000" height="1500">
<!-- SKETCH 4 singer (frame 790,670 x4.545) -->
<g transform="translate(790,670) scale(0.22)" fill="none" stroke="#979797" stroke-width="2" stroke-linecap="round" stroke-linejoin="round">
<path vector-effect="non-scaling-stroke" d="M570 45L580 240M570 45L830 90M685 90L690 230M830 90L830 245" stroke-width="2.4"/>
<ellipse vector-effect="non-scaling-stroke" cx="548" cy="215" rx="32" ry="48" transform="rotate(20 548 215)"/>
<ellipse vector-effect="non-scaling-stroke" cx="665" cy="225" rx="30" ry="40" transform="rotate(20 665 225)"/>
<ellipse vector-effect="non-scaling-stroke" cx="785" cy="235" rx="40" ry="36" transform="rotate(20 785 235)"/>
<ellipse vector-effect="non-scaling-stroke" cx="345" cy="325" rx="28" ry="58" transform="rotate(10 345 325)"/>
<path vector-effect="non-scaling-stroke" d="M62 410L175 500L180 485L195 540L205 640"/>
<ellipse vector-effect="non-scaling-stroke" cx="175" cy="665" rx="48" ry="55" transform="rotate(20 175 665)"/>
<path vector-effect="non-scaling-stroke" d="M80 780C150 760 240 650 300 500C380 300 480 150 600 110C750 90 900 130 1000 220" stroke="#a8a8a8" stroke-width="1.4"/>
<path vector-effect="non-scaling-stroke" d="M455 455C470 400 540 360 635 350C620 380 600 420 590 505C560 450 510 440 455 455Z" fill="#9a9a9a" stroke="#8a8a8a"/>
<path vector-effect="non-scaling-stroke" d="M635 355C720 370 820 390 910 430"/>
<path vector-effect="non-scaling-stroke" d="M455 450C410 520 380 650 380 800C390 950 440 1050 540 1100C650 1150 850 1130 1000 1040C1120 960 1180 830 1170 700C1160 600 1110 520 1050 480"/>
<path vector-effect="non-scaling-stroke" d="M490 760C520 610 620 510 760 490C900 480 1010 540 1030 650C1040 760 940 860 780 920C680 950 590 960 530 920C500 880 485 820 490 760Z"/>
<path vector-effect="non-scaling-stroke" d="M650 900C660 800 730 700 830 690C900 690 930 740 920 790"/>
<path vector-effect="non-scaling-stroke" d="M500 720C520 700 560 700 580 730C580 760 540 770 510 750Z"/>
<g stroke="#a2a2a2" stroke-width="1.2">
<path vector-effect="non-scaling-stroke" d="M530 760L560 930M570 690L600 940M610 640L640 940M650 600L670 860M690 580L710 730M730 570L740 700M770 560L780 690M810 550L820 680M850 550L860 690M890 560L900 700M930 570L940 720M970 590L980 720M1010 620L1010 700"/>
</g>
<path vector-effect="non-scaling-stroke" d="M440 540C400 600 360 700 290 780C230 830 170 850 160 900C160 950 230 960 300 900"/>
<path vector-effect="non-scaling-stroke" d="M360 870C300 920 250 990 250 1050C250 1120 290 1150 340 1160"/>
<path vector-effect="non-scaling-stroke" d="M1120 270C1110 320 1130 370 1170 370C1210 360 1220 300 1200 230C1180 200 1150 210 1120 270Z"/>
<path vector-effect="non-scaling-stroke" d="M1200 230C1190 280 1200 330 1240 330M1270 190C1260 240 1270 300 1310 300M1300 180C1290 240 1300 290 1340 290"/>
<path vector-effect="non-scaling-stroke" d="M1165 205C1250 180 1380 160 1510 160M1180 370C1300 340 1420 310 1500 290"/>
<ellipse vector-effect="non-scaling-stroke" cx="1485" cy="260" rx="60" ry="90" transform="rotate(-10 1485 260)"/>
<path vector-effect="non-scaling-stroke" d="M1000 300C920 310 900 400 930 480C960 540 1040 560 1100 540"/>
<path vector-effect="non-scaling-stroke" d="M950 320L1080 500M1000 290L1140 440M960 430L1060 330"/>
<path vector-effect="non-scaling-stroke" d="M1150 480C1140 440 1200 420 1280 420C1350 420 1370 460 1330 490C1280 520 1180 520 1150 480Z"/>
<path vector-effect="non-scaling-stroke" d="M1340 380C1370 400 1380 440 1360 470"/>
<path vector-effect="non-scaling-stroke" d="M1510 160C1600 200 1680 300 1700 400C1710 500 1780 560 1880 640C1920 700 1900 760 1850 790C1750 810 1680 800 1640 760C1600 720 1570 690 1540 660"/>
<path vector-effect="non-scaling-stroke" d="M1540 220C1620 260 1660 340 1680 430"/>
<path vector-effect="non-scaling-stroke" d="M1370 420L1530 650L1540 740"/>
<path vector-effect="non-scaling-stroke" d="M1520 650L1160 850L1130 900"/>
<path vector-effect="non-scaling-stroke" d="M1870 780C1700 850 1500 950 1300 1090"/>
<path vector-effect="non-scaling-stroke" d="M1200 820C1100 880 1000 960 950 1050"/>
<path vector-effect="non-scaling-stroke" d="M1150 960C1050 1000 980 1080 940 1150"/>
<path vector-effect="non-scaling-stroke" d="M1250 660C1210 700 1200 740 1230 770"/>
<path vector-effect="non-scaling-stroke" d="M340 1165C300 1200 270 1260 260 1345C270 1380 330 1400 480 1355"/>
<path vector-effect="non-scaling-stroke" d="M520 1255C600 1200 700 1175 1000 1275"/>
<path vector-effect="non-scaling-stroke" d="M640 1105C700 1150 800 1180 830 1175C900 1230 960 1260 1010 1275"/>
<path vector-effect="non-scaling-stroke" d="M520 1465C540 1600 580 1800 650 2025"/>
<path vector-effect="non-scaling-stroke" d="M560 1295C590 1500 620 1750 660 2045"/>
<path vector-effect="non-scaling-stroke" d="M1030 1085C990 1300 950 1450 800 1700C700 1850 640 1950 520 2205" />
<path vector-effect="non-scaling-stroke" d="M1330 1045C1370 1300 1380 1550 1330 1750C1300 1950 1320 2100 1330 2205"/>
<path vector-effect="non-scaling-stroke" d="M1040 1275C1060 1160 1180 1110 1250 1180C1290 1280 1250 1360 1130 1415C1100 1500 1190 1600 1140 1665C1060 1720 990 1800 930 1985"/>
<path vector-effect="non-scaling-stroke" d="M1020 1285L1060 1545L1120 1580"/>
<path vector-effect="non-scaling-stroke" d="M1180 1605C1150 1750 1170 1950 1140 2245"/>
<path vector-effect="non-scaling-stroke" d="M760 1425L800 1725"/>
<path vector-effect="non-scaling-stroke" d="M360 1945C450 1900 560 1930 650 2025C760 2090 880 2060 1050 1945C1120 1950 1200 1960 1260 1955"/>
<path vector-effect="non-scaling-stroke" d="M370 1975C420 2010 500 2060 545 2115"/>
<path vector-effect="non-scaling-stroke" d="M520 2205C700 2270 1000 2285 1380 2245"/>
<path vector-effect="non-scaling-stroke" d="M820 2245C850 2150 900 2100 1000 2085"/>
<path vector-effect="non-scaling-stroke" d="M1340 1925C1380 2000 1440 2080 1450 2150C1430 2220 1400 2250 1380 2250" stroke="#8e8e8e" stroke-width="3"/>
<path vector-effect="non-scaling-stroke" d="M1310 1475C1500 1520 1700 1600 1850 1720C1940 1830 1950 2000 1920 2100C1880 2170 1840 2200 1820 2210"/>
</g>
<!-- SKETCH 5 shrug (frame 1300,680 x4.255) -->
<g transform="translate(1300,680) scale(0.235)" fill="none" stroke="#979797" stroke-width="2" stroke-linecap="round" stroke-linejoin="round">
<path vector-effect="non-scaling-stroke" d="M120 280L160 350L188 395M150 340L155 540"/>
<ellipse vector-effect="non-scaling-stroke" cx="145" cy="540" rx="30" ry="55" transform="rotate(10 145 540)"/>
<path vector-effect="non-scaling-stroke" d="M1530 420L1525 660M1530 470L1625 590L1595 720"/>
<ellipse vector-effect="non-scaling-stroke" cx="1490" cy="660" rx="33" ry="48" transform="rotate(15 1490 660)"/>
<ellipse vector-effect="non-scaling-stroke" cx="1565" cy="725" rx="38" ry="55" transform="rotate(15 1565 725)"/>
<path vector-effect="non-scaling-stroke" d="M690 80C800 70 1000 110 1100 180C1140 210 1120 230 1070 215C980 190 850 170 720 130C690 120 680 100 690 80Z"/>
<path vector-effect="non-scaling-stroke" d="M560 200C530 250 550 310 620 315C720 310 820 290 900 280M565 230C650 220 800 205 950 190"/>
<path vector-effect="non-scaling-stroke" d="M580 520C600 420 700 310 850 270C1000 240 1180 270 1290 360C1350 420 1380 500 1380 580"/>
<path vector-effect="non-scaling-stroke" d="M640 470C700 380 820 320 1000 300C1150 300 1260 360 1310 460"/>
<ellipse vector-effect="non-scaling-stroke" cx="1320" cy="560" rx="55" ry="130"/>
<path vector-effect="non-scaling-stroke" d="M850 470C700 480 600 540 600 620C620 700 650 780 720 880C800 940 900 960 1000 950C1120 920 1200 840 1210 740C1220 640 1180 530 1110 480C1060 460 950 455 850 470Z"/>
<path vector-effect="non-scaling-stroke" d="M990 615C1030 595 1080 600 1110 630M690 590C720 575 760 575 780 590"/>
<path vector-effect="non-scaling-stroke" d="M680 680C750 700 850 730 1000 760C1060 760 1100 750 1130 740"/>
<path vector-effect="non-scaling-stroke" d="M780 800C800 770 880 760 940 800C950 830 920 850 860 850C810 850 785 830 780 800Z" fill="#a5a5a5"/>
<path vector-effect="non-scaling-stroke" d="M1000 300C950 450 920 600 900 950" stroke="#a5a5a5" stroke-width="1.4"/>
<path vector-effect="non-scaling-stroke" d="M830 850C820 880 830 920 840 940"/>
<path vector-effect="non-scaling-stroke" d="M380 420C420 450 500 480 560 510C600 560 620 620 640 700"/>
<path vector-effect="non-scaling-stroke" d="M350 460C340 500 380 560 440 580C500 590 540 600 560 610"/>
<path vector-effect="non-scaling-stroke" d="M450 350C520 340 600 350 660 370"/>
<path vector-effect="non-scaling-stroke" d="M230 690C300 640 420 600 560 620M220 740C250 790 300 800 380 760C450 720 520 700 600 690"/>
<path vector-effect="non-scaling-stroke" d="M480 650C440 700 400 780 340 900C330 960 350 990 400 990"/>
<path vector-effect="non-scaling-stroke" d="M620 690C560 750 500 850 480 940"/>
<path vector-effect="non-scaling-stroke" d="M560 810C520 850 500 880 500 920"/>
<path vector-effect="non-scaling-stroke" d="M40 1006C100 970 250 940 420 936C480 960 500 1016 490 1086C420 1080 350 1066 200 1066C100 1050 50 1030 40 1006Z"/>
<path vector-effect="non-scaling-stroke" d="M110 1016C200 990 300 980 420 990"/>
<path vector-effect="non-scaling-stroke" d="M300 1116C320 1200 350 1300 350 1436C360 1550 420 1620 500 1626C560 1600 580 1450 600 1236L660 1196"/>
<path vector-effect="non-scaling-stroke" d="M420 1056C460 1200 500 1350 560 1486"/>
<path vector-effect="non-scaling-stroke" d="M700 1456C730 1560 700 1650 640 1760C580 1860 540 1930 520 1986"/>
<path vector-effect="non-scaling-stroke" d="M400 1666C380 1740 400 1820 520 1856C560 1866 600 1860 620 1850"/>
<path vector-effect="non-scaling-stroke" d="M400 1680C450 1760 520 1790 600 1760"/>
<path vector-effect="non-scaling-stroke" d="M700 940C720 1030 740 1100 770 1126C800 1100 830 1000 820 960"/>
<path vector-effect="non-scaling-stroke" d="M820 1056C880 1110 960 1160 1050 1226"/>
<path vector-effect="non-scaling-stroke" d="M600 1286C650 1400 700 1500 780 1606"/>
<path vector-effect="non-scaling-stroke" d="M620 1320C700 1500 850 1620 1000 1636C1100 1630 1180 1590 1220 1536" stroke="#a8a8a8" stroke-width="1.4"/>
<circle vector-effect="non-scaling-stroke" cx="1050" cy="1236" r="20"/>
<path vector-effect="non-scaling-stroke" d="M1040 1256C1080 1256 1140 1256 1160 1260C1160 1300 1120 1320 1060 1316"/>
<path vector-effect="non-scaling-stroke" d="M1020 986C1030 1060 1060 1110 1200 1146C1300 1130 1400 1060 1430 980C1440 940 1440 920 1430 900"/>
<path vector-effect="non-scaling-stroke" d="M1060 1036C1120 1040 1180 1040 1200 1046C1160 1100 1140 1150 1100 1196"/>
<path vector-effect="non-scaling-stroke" d="M1080 1316C1080 1450 1060 1600 980 1786C960 1900 950 2000 950 2036"/>
<path vector-effect="non-scaling-stroke" d="M1280 1216C1300 1350 1300 1450 1220 1586C1170 1700 1160 1800 1190 1906C1250 1960 1280 2000 1300 2026"/>
<path vector-effect="non-scaling-stroke" d="M1260 1186L1450 1336M1300 1486C1360 1560 1420 1640 1450 1686L1530 1676C1570 1666 1600 1580 1680 1376C1700 1300 1680 1270 1620 1240C1550 1210 1500 1220 1480 1240C1450 1320 1430 1420 1420 1536"/>
<path vector-effect="non-scaling-stroke" d="M1520 1136C1560 1100 1620 1086 1700 1100C1800 1130 1900 1160 1940 1176C1960 1210 1940 1230 1860 1236C1760 1230 1680 1210 1620 1226C1560 1230 1520 1220 1520 1136Z"/>
<path vector-effect="non-scaling-stroke" d="M1600 1166C1700 1160 1800 1180 1880 1200"/>
<path vector-effect="non-scaling-stroke" d="M880 1796C960 1810 1020 1816 1060 1816C1070 1850 1080 1900 1120 1926C1170 1960 1180 2000 1180 2026"/>
<path vector-effect="non-scaling-stroke" d="M880 1796C860 1850 840 1920 760 1926C730 1960 710 2000 700 2026"/>
<path vector-effect="non-scaling-stroke" d="M640 1736C620 1850 700 1950 850 1976C950 1976 1010 1900 1020 1836" stroke="#a8a8a8" stroke-width="1.4"/>
<path vector-effect="non-scaling-stroke" d="M520 1986C700 2040 1000 2060 1300 2026"/>
</g>
</svg>

<!-- canvas shadow + floating panel -->
<div class="a" style="left:1914px;top:232px;width:86px;height:530px;background:#3a3a3a;box-shadow:-3px 8px 22px rgba(0,0,0,0.45)"></div>
<div class="a" style="left:1924px;top:268px;width:66px;height:484px;background:#4d4d4d"></div>
<svg style="left:0;top:0" width="2000" height="800">
<circle cx="1957" cy="300" r="27.5" fill="#303030"/>
<circle cx="1957" cy="398" r="27.5" fill="#303030"/>
<path d="M1930 245H1947M1930 250.5H1947M1930 256H1947" stroke="#8c8c8c" stroke-width="1.6"/>
<path d="M1961 244.5L1974 257.5M1974 244.5L1961 257.5" stroke="#d0d0d0" stroke-width="2.2"/>
<circle cx="1988.5" cy="256" r="1.2" fill="#bbb"/>
</svg>
</body></html>
